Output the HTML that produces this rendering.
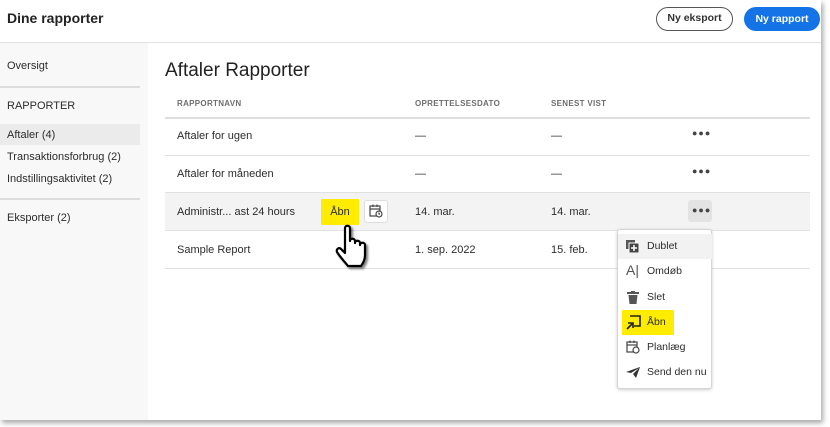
<!DOCTYPE html><html><head><style>
*{margin:0;padding:0;box-sizing:border-box}
body{width:830px;height:427px;background:#fff;font-family:"Liberation Sans",sans-serif;color:#2c2c2c;position:relative;overflow:hidden;font-size:11px}
.a{position:absolute;white-space:nowrap}
.frame{position:absolute;left:0;top:0;width:821px;height:420px;background:#fff;box-shadow:2px 3px 5px rgba(0,0,0,.35);overflow:hidden}
.side{position:absolute;left:0;top:43px;width:148px;height:380px;background:#f8f8f8}
.hl{position:absolute;left:0;top:124px;width:140px;height:21px;background:#ebebeb}
.line{position:absolute;height:1px;background:#e1e1e1}
.row{position:absolute;left:165px;width:645px;height:38px;border-bottom:1px solid #e1e1e1}
.th{font-size:8px;font-weight:bold;color:#6e6e6e;letter-spacing:.3px}
.dots{font-size:9px;font-weight:bold;letter-spacing:1px;color:#444}
.mi{position:absolute;left:0;width:94px;height:25px}
.mi span{position:absolute;left:29px;top:6px;font-size:10.5px}
</style></head><body>
<div class="frame">
<div class="a" style="left:7px;top:10px;font-size:14px;font-weight:bold;color:#222">Dine rapporter</div>
<div class="a" style="left:656px;top:7px;width:77px;height:24px;border:1.5px solid #555;border-radius:12px;text-align:center;line-height:21px;font-size:10.5px;font-weight:bold;color:#333">Ny eksport</div>
<div class="a" style="left:744px;top:7px;width:76px;height:24px;background:#1473e6;border-radius:12px;text-align:center;line-height:24px;font-size:10.5px;font-weight:bold;color:#fff">Ny rapport</div>
<div class="line" style="left:0;top:42px;width:821px"></div>
<div class="side"></div>
<div class="a" style="left:7px;top:60px">Oversigt</div>
<div class="line" style="left:0;top:86px;width:140px;background:#ddd;height:2px"></div>
<div class="a" style="left:7px;top:100px">RAPPORTER</div>
<div class="hl"></div>
<div class="a" style="left:7px;top:129px">Aftaler (4)</div>
<div class="a" style="left:7px;top:151px">Transaktionsforbrug (2)</div>
<div class="a" style="left:7px;top:173px">Indstillingsaktivitet (2)</div>
<div class="line" style="left:0;top:198px;width:140px;background:#ddd;height:2px"></div>
<div class="a" style="left:7px;top:212px">Eksporter (2)</div>
<div class="a" style="left:165px;top:60px;font-size:19px;color:#222">Aftaler Rapporter</div>
<div class="a th" style="left:177px;top:99px">RAPPORTNAVN</div>
<div class="a th" style="left:415px;top:99px">OPRETTELSESDATO</div>
<div class="a th" style="left:551px;top:99px">SENEST VIST</div>
<div class="line" style="left:165px;top:117px;width:645px;background:#ddd;height:2px"></div>
<div class="row" style="top:118px"></div>
<div class="row" style="top:155px"></div>
<div class="row" style="top:193px;background:#f3f3f3"></div>
<div class="row" style="top:231px"></div>
<div class="a" style="left:177px;top:130px">Aftaler for ugen</div><div class="a" style="left:415px;top:130px">—</div><div class="a" style="left:551px;top:130px">—</div><div class="a dots" style="left:692px;top:128px">●●●</div>
<div class="a" style="left:177px;top:168px">Aftaler for måneden</div><div class="a" style="left:415px;top:168px">—</div><div class="a" style="left:551px;top:168px">—</div><div class="a dots" style="left:692px;top:166px">●●●</div>
<div class="a" style="left:177px;top:206px">Administr... ast 24 hours</div>
<div class="a" style="left:321px;top:199px;width:38px;height:26px;background:#ffec00;text-align:center;line-height:26px">Åbn</div>
<div class="a" style="left:364px;top:200px;width:24px;height:23px;border:1px solid #ddd;border-radius:3px;background:#fff"></div>
<svg class="a" style="left:369px;top:204px" width="14" height="14" viewBox="0 0 14 14" fill="none" stroke="#444" stroke-width="1.2"><rect x="1" y="2" width="10" height="10"/><line x1="1" y1="5" x2="11" y2="5"/><line x1="4" y1="0.5" x2="4" y2="3"/><line x1="8" y1="0.5" x2="8" y2="3"/><circle cx="10" cy="10" r="3" fill="#fff"/><path d="M10 8.5V10H11"/></svg>
<div class="a" style="left:415px;top:206px">14. mar.</div><div class="a" style="left:551px;top:206px">14. mar.</div>
<div class="a" style="left:688px;top:200px;width:24px;height:22px;background:#e3e3e3;border-radius:3px"></div><div class="a dots" style="left:692px;top:205px">●●●</div>
<svg class="a" style="left:333px;top:224px" width="40" height="48" viewBox="0 0 40 48"><path d="M12 4c0-3 5-3 5 0v13c0-3 5-3 5 0v2c0-3 5-3 5 0v2c0-3 5-3 5 0v10c0 5-2 8-4 11H15c-3-4-8-9-11-14-1-3 2-5 4-3l4 4z" fill="#fff" stroke="#000" stroke-width="2.2" stroke-linejoin="round" style="filter:drop-shadow(2px 2px 1px rgba(0,0,0,.5))"/></svg>
<div class="a" style="left:177px;top:244px">Sample Report</div><div class="a" style="left:415px;top:244px">1. sep. 2022</div><div class="a" style="left:551px;top:244px">15. feb.</div>
<div class="a" style="left:617px;top:229px;width:95px;height:160px;background:#fff;border:1px solid #d5d5d5;border-radius:3px;box-shadow:0 1px 3px rgba(0,0,0,.2)">
<div class="mi" style="top:4px;background:#f2f2f2"><svg class="a" style="left:8px;top:6px" width="13" height="13"><rect x="0" y="0" width="9" height="9" fill="#555"/><rect x="3" y="3" width="10" height="10" fill="#444" stroke="#fff"/><path d="M8 5v6M5 8h6" stroke="#fff" stroke-width="1.5"/></svg><span>Dublet</span></div>
<div class="mi" style="top:29px"><span style="left:8px;top:3px;font-size:14px;color:#555">A|</span><span>Omdøb</span></div>
<div class="mi" style="top:55px"><svg class="a" style="left:9px;top:6px" width="12" height="13"><rect x="0" y="1" width="12" height="2" fill="#555"/><rect x="4" y="0" width="4" height="2" fill="#555"/><path d="M1.5 4h9l-1 9h-7z" fill="#555"/></svg><span>Slet</span></div>
<div class="mi" style="top:80px;left:4px;width:52px;background:#ffec00"><svg class="a" style="left:4px;top:5px" width="15" height="15" fill="none" stroke="#222" stroke-width="1.6"><path d="M4 1h10v10H8"/><path d="M1 14l6-6M2 8h5v5" /></svg><span style="left:25px">Åbn</span></div>
<div class="mi" style="top:105px"><svg class="a" style="left:8px;top:5px" width="14" height="14" fill="none" stroke="#444" stroke-width="1.2"><rect x="1" y="2" width="10" height="10"/><line x1="1" y1="5" x2="11" y2="5"/><line x1="4" y1="0.5" x2="4" y2="3"/><line x1="8" y1="0.5" x2="8" y2="3"/><circle cx="10" cy="10" r="3" fill="#fff"/></svg><span>Planlæg</span></div>
<div class="mi" style="top:130px"><svg class="a" style="left:8px;top:7px" width="14" height="11"><path d="M0 5L14 0L10 11L7 7L13 1L5 6z" fill="#333"/></svg><span>Send den nu</span></div>
</div>
</div>
</body></html>
